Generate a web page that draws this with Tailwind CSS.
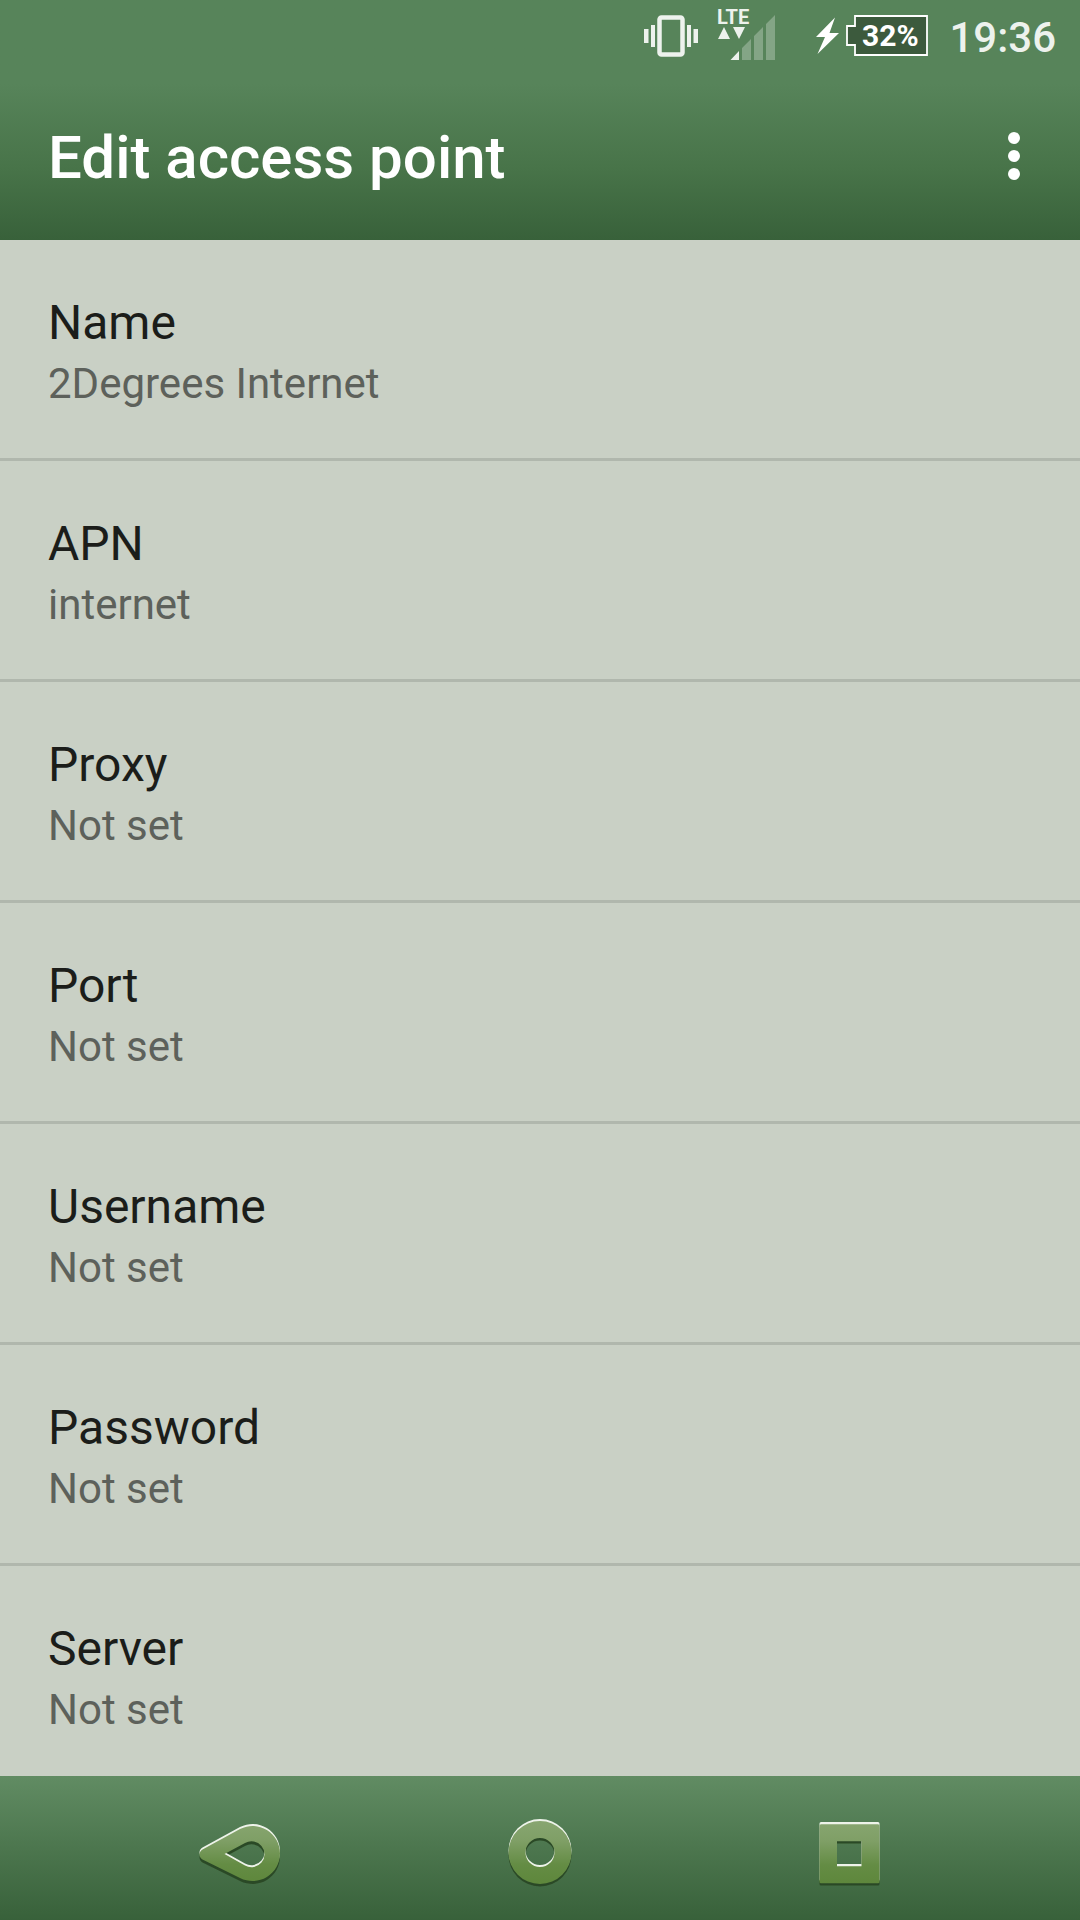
<!DOCTYPE html>
<html lang="en">
<head>
  <meta charset="utf-8">
  <meta name="viewport" content="width=device-width, initial-scale=1.0">
  <title>Edit access point</title>
  <script src="https://cdn.jsdelivr.net/npm/@tailwindcss/browser@4"></script>
</head>
<body class="flex h-screen flex-col bg-[#c9d0c5] font-[Roboto,sans-serif]">

  <!-- Header -->
  <header class="shrink-0 bg-linear-to-b from-[#57845a] from-35% via-[#487449] via-70% to-[#38613a] text-white">

    <!-- Status bar -->
    <div class="flex h-[72px] items-center justify-end pr-6">
      <svg class="mr-4 h-[72px] w-[58px]" viewBox="642 0 58 72" fill="#edf2ed" role="img" aria-label="Vibrate">
        <rect x="659.5" y="17.500" width="23" height="37" rx="2" fill="none" stroke="#edf2ed" stroke-width="4.5"/>
        <rect x="651" y="25" width="4" height="22"/>
        <rect x="644" y="29" width="4.5" height="14"/>
        <rect x="687" y="25" width="4" height="22"/>
        <rect x="693.5" y="29" width="4.5" height="14"/>
      </svg>
      <svg class="mr-9 h-[72px] w-[62px]" viewBox="716 0 62 72" fill="#edf2ed" role="img" aria-label="LTE signal">
        <text x="717" y="24" font-size="20" font-weight="700">LTE</text>
        <path d="M718 39l6-12 6 12zM733 27h12l-6 12zM730.500 60l8.500-9v9z"/>
        <path fill-opacity=".3" d="M742 60V48l9-9v21zM754 60V36l9-9v33zM766 60V24l9-9v45z"/>
      </svg>
      <svg class="mr-[19px] h-[72px] w-[116px]" viewBox="814 0 116 72" fill="#fff" role="img" aria-label="Battery charging">
        <path d="M835 17.500L816 37h9l-7.500 17L839 33h-9.500z"/>
        <path d="M855 16h72v39h-72V45h-8V26h8z" fill="#3c5a3d" stroke="#fff" stroke-width="1.800"/>
        <text x="862" y="46" font-size="30" font-weight="700">32%</text>
      </svg>
      <span class="pt-1 text-[42px] leading-[72px] font-medium text-[#edf2ed]">19:36</span>
    </div>

    <!-- App bar -->
    <div class="flex h-[168px] items-center justify-between pr-[42px] pl-12">
      <h1 class="pt-1 text-[60px] leading-[72px] font-medium">Edit access point</h1>
      <button type="button" aria-label="More options">
        <svg class="h-12 w-12" viewBox="0 0 48 48" fill="#fff">
          <circle cx="24" cy="6" r="6"/>
          <circle cx="24" cy="24" r="6"/>
          <circle cx="24" cy="42" r="6"/>
        </svg>
      </button>
    </div>
  </header>

  <!-- Settings list -->
  <main class="min-h-0 flex-1 overflow-y-auto [scrollbar-width:none]">
    <ul class="text-[48px] leading-[56px] text-[#1b1d1a]">
      <li class="border-b-3 border-[#b0b7ad]">
        <button type="button" class="flex w-full flex-col gap-[5px] px-12 pt-[55px] pb-[46px] text-left">
          <span>Name</span>
          <span class="text-[42px] text-[#5d615b]">2Degrees Internet</span>
        </button>
      </li>
      <li class="border-b-3 border-[#b0b7ad]">
        <button type="button" class="flex w-full flex-col gap-[5px] px-12 pt-[55px] pb-[46px] text-left">
          <span>APN</span>
          <span class="text-[42px] text-[#5d615b]">internet</span>
        </button>
      </li>
      <li class="border-b-3 border-[#b0b7ad]">
        <button type="button" class="flex w-full flex-col gap-[5px] px-12 pt-[55px] pb-[46px] text-left">
          <span>Proxy</span>
          <span class="text-[42px] text-[#5d615b]">Not set</span>
        </button>
      </li>
      <li class="border-b-3 border-[#b0b7ad]">
        <button type="button" class="flex w-full flex-col gap-[5px] px-12 pt-[55px] pb-[46px] text-left">
          <span>Port</span>
          <span class="text-[42px] text-[#5d615b]">Not set</span>
        </button>
      </li>
      <li class="border-b-3 border-[#b0b7ad]">
        <button type="button" class="flex w-full flex-col gap-[5px] px-12 pt-[55px] pb-[46px] text-left">
          <span>Username</span>
          <span class="text-[42px] text-[#5d615b]">Not set</span>
        </button>
      </li>
      <li class="border-b-3 border-[#b0b7ad]">
        <button type="button" class="flex w-full flex-col gap-[5px] px-12 pt-[55px] pb-[46px] text-left">
          <span>Password</span>
          <span class="text-[42px] text-[#5d615b]">Not set</span>
        </button>
      </li>
      <li class="border-b-3 border-[#b0b7ad]">
        <button type="button" class="flex w-full flex-col gap-[5px] px-12 pt-[55px] pb-[46px] text-left">
          <span>Server</span>
          <span class="text-[42px] text-[#5d615b]">Not set</span>
        </button>
      </li>
    </ul>
  </main>

  <!-- Navigation bar -->
  <nav class="flex h-36 shrink-0 justify-center bg-linear-to-b from-[#618c63] to-[#38613a]">
    <button type="button" class="flex w-[309px] justify-center" aria-label="Back">
      <svg class="h-36 w-[120px]" viewBox="0 0 120 144">
        <defs>
          <linearGradient id="green" x1="0" y1="46" x2="0" y2="106" gradientUnits="userSpaceOnUse">
            <stop offset="0" stop-color="#87a56f"/>
            <stop offset=".3" stop-color="#7f9f66"/>
            <stop offset=".7" stop-color="#648c44"/>
            <stop offset="1" stop-color="#5e873c"/>
          </linearGradient>
          <filter id="soft" x="-10%" y="-10%" width="120%" height="120%"><feGaussianBlur stdDeviation=".6"/></filter>
          <path id="back" fill-rule="evenodd" d="M31.500 73L69 52.500A27.500 27.500 0 1 1 69 101.500L31.500 83C27.500 80.500 27.500 75.500 31.500 73zM53.500 77.500L74 89A13 13 0 1 0 74 66.500z"/>
        </defs>
        <use href="#back" y="3.500" fill="#2c4a26" filter="url(#soft)"/>
        <use href="#back" y="-1.500" fill="#eef3ea" filter="url(#soft)"/>
        <use href="#back" y=".5" fill="url(#green)"/>
      </svg>
    </button>
    <button type="button" class="flex w-[309px] justify-center" aria-label="Home">
      <svg class="h-36 w-[120px]" viewBox="0 0 120 144">
        <defs>
          <path id="home" fill-rule="evenodd" d="M60 44a31.500 31.500 0 1 0 0 63a31.500 31.500 0 1 0 0-63zM60 61a14.500 14.500 0 1 0 0 29a14.500 14.500 0 1 0 0-29z"/>
        </defs>
        <use href="#home" y="3.500" fill="#2c4a26" filter="url(#soft)"/>
        <use href="#home" y="-1" fill="#eef3ea" filter="url(#soft)"/>
        <use href="#home" y="1" fill="url(#green)"/>
      </svg>
    </button>
    <button type="button" class="flex w-[309px] justify-center" aria-label="Recent apps">
      <svg class="h-36 w-[120px]" viewBox="0 0 120 144">
        <defs>
          <path id="recent" fill-rule="evenodd" d="M32 47h57a1.500 1.500 0 0 1 1.500 1.500v56a1.500 1.500 0 0 1-1.500 1.500h-57a1.500 1.500 0 0 1-1.500-1.500v-56a1.500 1.500 0 0 1 1.500-1.500zM48 64v25h24.500v-25z"/>
        </defs>
        <use href="#recent" y="3.500" fill="#2c4a26" filter="url(#soft)"/>
        <use href="#recent" y="-1" fill="#eef3ea" filter="url(#soft)"/>
        <use href="#recent" y="1.200" fill="url(#green)"/>
      </svg>
    </button>
  </nav>

</body>
</html>
